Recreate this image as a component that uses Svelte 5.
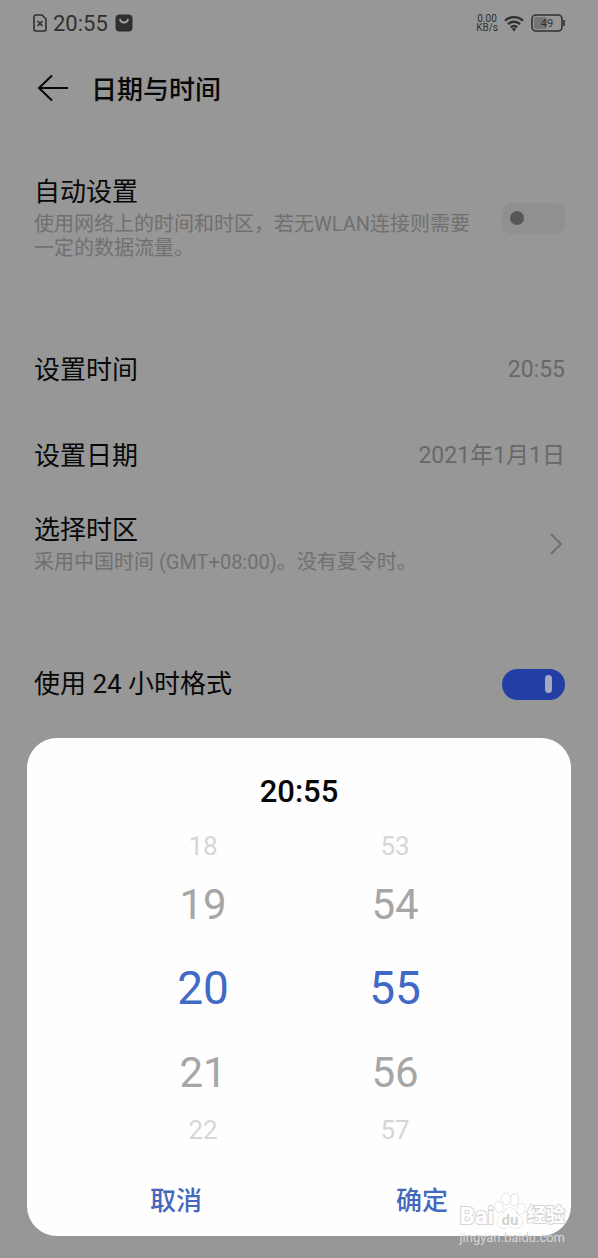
<script>
	let autoTime = $state(false);
	let use24Hour = $state(true);
	let hour = $state(20);
	let minute = $state(55);

	const offsets = [-2, -1, 0, 1, 2];
	const pad = (value) => String(value).padStart(2, '0');
	const wrap = (value, size) => (value + size) % size;

	let time = $derived(`${pad(hour)}:${pad(minute)}`);
	let columns = $derived([
		{ label: '小时', values: offsets.map((o) => wrap(hour + o, 24)), pick: (v) => (hour = v) },
		{ label: '分钟', values: offsets.map((o) => wrap(minute + o, 60)), pick: (v) => (minute = v) }
	]);
</script>

<div class="screen">
	<div class="status">
		<svg width="14" height="18" viewBox="0 0 14 18" fill="none" stroke="currentColor" stroke-width="1.6">
			<path d="M2 1h7l4 4v10.500a1.500 1.500 0 0 1-1.500 1.500h-9A1.500 1.500 0 0 1 1 15.500V2.500A1.500 1.500 0 0 1 2.500 1z" />
			<path d="M4.500 7l5 5M9.500 7l-5 5" />
		</svg>
		<span class="clock">20:55</span>
		<svg width="18" height="18" viewBox="0 0 18 18">
			<rect x="0.500" y="0.500" width="17" height="17" rx="4" fill="currentColor" />
			<path d="M5 5.500c1 4 7 4 8 0" fill="none" stroke="#a0a0a0" stroke-width="1.800" stroke-linecap="round" />
		</svg>
		<div class="speed"><span>0.00</span><span>KB/s</span></div>
		<svg width="20" height="17" viewBox="0 0 20 17" fill="none" stroke="currentColor" stroke-width="2.300">
			<path d="M1 5.800C6 .8 14 .8 19 5.800" />
			<path d="M4 9.200c3.500-3.300 8.500-3.300 12 0" />
			<path d="M6.800 12.300c2-1.700 4.400-1.700 6.400 0" />
			<path d="M7.800 13.700L10 16.500l2.200-2.800c-1.300-1-3.100-1-4.400 0z" fill="currentColor" stroke="none" />
		</svg>
		<svg class="battery" width="34" height="18" viewBox="0 0 34 18">
			<rect x="1" y="1" width="30" height="16" rx="4" fill="none" stroke="currentColor" stroke-width="1.600" />
			<rect x="3" y="3" width="13" height="12" rx="2" fill="#747474" />
			<path d="M33 6v6" stroke="currentColor" stroke-width="1.600" />
			<text x="16" y="13" text-anchor="middle" font-size="11" fill="currentColor">49</text>
		</svg>
	</div>

	<header>
		<button class="back" aria-label="返回">
			<svg width="32" height="28" viewBox="0 0 32 28" fill="none" stroke="currentColor" stroke-width="2">
				<path d="M31 14H2M15 1.500L2 14l13 12.500" />
			</svg>
		</button>
		<h1>日期与时间</h1>
	</header>

	<section>
		<div class="row">
			<label class="text" for="auto">
				<span class="name">自动设置</span>
				<span class="note">使用网络上的时间和时区，若无WLAN连接则需要一定的数据流量。</span>
			</label>
			<input id="auto" type="checkbox" role="switch" bind:checked={autoTime} />
		</div>
	</section>

	<section>
		<button class="row">
			<span class="name">设置时间</span>
			<span class="value">20:55</span>
		</button>
		<button class="row">
			<span class="name">设置日期</span>
			<span class="value">2021年1月1日</span>
		</button>
		<button class="row">
			<span class="text">
				<span class="name">选择时区</span>
				<span class="note">采用中国时间 (GMT+08:00)。没有夏令时。</span>
			</span>
			<svg width="16" height="24" viewBox="0 0 16 24" fill="none" stroke="#707070" stroke-width="2">
				<path d="M2 2l10 10L2 22" />
			</svg>
		</button>
	</section>

	<section>
		<div class="row">
			<label class="name" for="format">使用 24 小时格式</label>
			<input id="format" type="checkbox" role="switch" bind:checked={use24Hour} />
		</div>
	</section>

	<div class="sheet" role="dialog" aria-labelledby="picked">
		<h2 id="picked">{time}</h2>
		<div class="wheels">
			{#each columns as column}
				<div class="wheel" role="group" aria-label={column.label}>
					{#each column.values as value, i}
						<button
							class:current={i === 2}
							class:edge={i === 0 || i === 4}
							onclick={() => column.pick(value)}
						>{pad(value)}</button>
					{/each}
				</div>
			{/each}
		</div>
		<div class="actions">
			<button>取消</button>
			<button>确定</button>
		</div>
	</div>

	<div class="watermark">
		<div class="brand">
			<span class="latin">Bai</span>
			<svg width="32" height="38" viewBox="0 0 32 38">
				<g fill="#fff" stroke="#d2d2d2" stroke-width="1">
					<ellipse cx="5" cy="15" rx="3.800" ry="5.500" transform="rotate(-12 5 15)" />
					<ellipse cx="12" cy="7" rx="4" ry="5.800" />
					<ellipse cx="20.500" cy="7.500" rx="4" ry="5.800" transform="rotate(10 20.500 7.500)" />
					<ellipse cx="27" cy="17" rx="4" ry="5.500" transform="rotate(15 27 17)" />
					<path d="M16 16c4 0 5 3 7 5.500 3 3 6.500 4.500 5.500 9.500-1 4-4.500 5.500-7.500 5-4-.8-6-.8-10 0-4 .5-7.500-1.500-7.500-5.500 0-4 3-6 5.500-9 2-3 3-5.500 7-5.500z" />
				</g>
				<text x="16" y="33" text-anchor="middle" font-size="15" font-weight="700" fill="#d2d2d2">du</text>
			</svg>
			<span class="han">经验</span>
		</div>
		<div class="site">jingyan.baidu.com</div>
	</div>
</div>

<style>
	:global(body) {
		margin: 0;
		background: #979797;
	}

	.screen {
		position: relative;
		box-sizing: border-box;
		min-height: 100vh;
		background: #979797;
		color: #080808;
		font-family: Roboto, 'Noto Sans CJK SC', sans-serif;
		overflow: hidden;
	}

	button {
		padding: 0;
		border: 0;
		background: none;
		color: inherit;
		font: inherit;
		cursor: pointer;
	}

	.status {
		display: flex;
		align-items: center;
		height: 46px;
		padding: 0 33px;
		color: #303030;
	}

	.clock {
		margin: 0 7px 0 6px;
		font-size: 22px;
	}

	.speed {
		display: flex;
		flex-direction: column;
		align-items: center;
		margin: 0 6px 0 auto;
		font-size: 10px;
		line-height: 9px;
	}

	.battery {
		margin-left: 7px;
	}

	header {
		display: flex;
		align-items: center;
		gap: 22px;
		height: 83px;
		margin-bottom: 32px;
		padding: 0 37px;
	}

	.back {
		display: flex;
	}

	h1 {
		margin: 0;
		font-size: 26px;
		font-weight: 500;
	}

	section {
		margin-bottom: 52px;
	}

	.row {
		display: flex;
		align-items: center;
		justify-content: space-between;
		gap: 20px;
		box-sizing: border-box;
		width: 100%;
		min-height: 86px;
		padding: 15px 33px 15px 34px;
		text-align: left;
	}

	.text {
		display: flex;
		flex-direction: column;
		gap: 4px;
	}

	.name {
		font-size: 26px;
		line-height: 32px;
	}

	.note {
		color: #707070;
		font-size: 20px;
		line-height: 24px;
	}

	.value {
		color: #686868;
		font-size: 23px;
		line-height: 24px;
	}

	input {
		display: flex;
		flex: none;
		align-items: center;
		box-sizing: border-box;
		width: 63px;
		height: 31px;
		margin: 0;
		padding: 0 8px;
		border-radius: 10px;
		background: #909090;
		appearance: none;
	}

	input::before {
		content: '';
		width: 14px;
		height: 14px;
		border-radius: 50%;
		background: #575757;
	}

	input:checked {
		justify-content: flex-end;
		padding: 0 13px;
		border-radius: 16px;
		background: #233fa5;
	}

	input:checked::before {
		width: 7px;
		height: 18px;
		border-radius: 4px;
		background: #a3a8bb;
	}

	.sheet {
		position: absolute;
		right: 27px;
		bottom: 22px;
		left: 27px;
		padding: 36px 0 13px;
		border-radius: 30px;
		background: #fefefe;
	}

	h2 {
		margin: 0 0 20px;
		font-size: 31px;
		font-weight: 500;
		line-height: 36px;
		text-align: center;
	}

	.wheels {
		display: grid;
		grid-template-columns: 1fr 1fr;
		padding: 0 80px;
	}

	.wheel {
		display: grid;
		grid-template-rows: 32px 84px 84px 84px 32px;
	}

	.wheel button {
		color: #a6a6a6;
		font-size: 42px;
	}

	.wheel .current {
		color: #4169c6;
		font-size: 46px;
	}

	.wheel .edge {
		color: #d6d6d6;
		font-size: 26px;
	}

	.actions {
		display: grid;
		grid-template-columns: 1fr 1fr;
		margin-top: 28px;
		padding: 0 26px 1px;
	}

	.actions button {
		height: 48px;
		color: #4468bc;
		font-size: 26px;
		font-weight: 500;
	}

	.watermark {
		position: absolute;
		right: 33px;
		bottom: 12px;
		color: #fff;
		pointer-events: none;
	}

	.brand {
		display: flex;
		align-items: flex-end;
		justify-content: space-between;
		font-weight: 700;
		-webkit-text-stroke: 2px #d6d6d6;
		paint-order: stroke fill;
	}

	.brand text {
		-webkit-text-stroke: 0;
	}

	.latin {
		font-size: 24px;
		line-height: 28px;
	}

	.han {
		font-size: 19px;
		line-height: 28px;
	}

	.site {
		color: #d6d6d6;
		font-size: 13px;
		line-height: 16px;
	}
</style>
